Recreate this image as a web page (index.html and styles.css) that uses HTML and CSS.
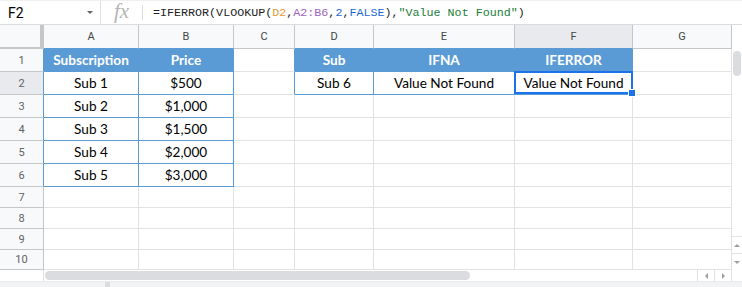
FILE: index.html
```html
<!DOCTYPE html>
<html lang="en">
<head>
    <meta charset="UTF-8">
    <meta name="viewport" content="width=device-width, initial-scale=1.0">
    <title>IFERROR VLOOKUP</title>
    <link rel="stylesheet" href="styles.css">
</head>
<body>
    <div class="formula-bar">
        <div class="name-box">
            <span>F2</span>
            <span class="caret"></span>
        </div>
        <div class="fx-box"><span class="fx">fx</span></div>
        <div class="formula">=IFERROR(VLOOKUP(<span class="ref1">D2</span>,<span class="ref2">A2:B6</span>,<span class="num">2</span>,<span class="num">FALSE</span>),<span class="str">"Value Not Found"</span>)</div>
    </div>

    <div class="sheet">
        <table class="grid">
            <colgroup>
                <col style="width: 44px">
                <col style="width: 95px">
                <col style="width: 95px">
                <col style="width: 61px">
                <col style="width: 79px">
                <col style="width: 141px">
                <col style="width: 118px">
                <col style="width: 99px">
            </colgroup>
            <tr class="head-row">
                <th class="corner"></th>
                <th class="blue-under">A</th>
                <th class="blue-under">B</th>
                <th>C</th>
                <th class="blue-under">D</th>
                <th class="blue-under">E</th>
                <th class="blue-under active">F</th>
                <th>G</th>
            </tr>
            <tr class="tall">
                <td class="rh edge">1</td>
                <td class="th-blue">Subscription</td>
                <td class="th-blue">Price</td>
                <td class="edge"></td>
                <td class="th-blue">Sub</td>
                <td class="th-blue">IFNA</td>
                <td class="th-blue">IFERROR</td>
                <td></td>
            </tr>
            <tr class="tall">
                <td class="rh active edge">2</td>
                <td class="bl">Sub 1</td>
                <td class="bl">$500</td>
                <td class="edge"></td>
                <td class="bl">Sub 6</td>
                <td class="bl">Value Not Found</td>
                <td class="bl selected">Value Not Found<span class="sel"><span class="handle"></span></span></td>
                <td></td>
            </tr>
            <tr class="tall">
                <td class="rh edge">3</td>
                <td class="bl">Sub 2</td>
                <td class="bl">$1,000</td>
                <td></td><td></td><td></td><td></td><td></td>
            </tr>
            <tr class="tall">
                <td class="rh edge">4</td>
                <td class="bl">Sub 3</td>
                <td class="bl">$1,500</td>
                <td></td><td></td><td></td><td></td><td></td>
            </tr>
            <tr class="tall">
                <td class="rh edge">5</td>
                <td class="bl">Sub 4</td>
                <td class="bl">$2,000</td>
                <td></td><td></td><td></td><td></td><td></td>
            </tr>
            <tr class="tall">
                <td class="rh edge">6</td>
                <td class="bl">Sub 5</td>
                <td class="bl">$3,000</td>
                <td></td><td></td><td></td><td></td><td></td>
            </tr>
            <tr class="short">
                <td class="rh">7</td>
                <td></td><td></td><td></td><td></td><td></td><td></td><td></td>
            </tr>
            <tr class="short">
                <td class="rh">8</td>
                <td></td><td></td><td></td><td></td><td></td><td></td><td></td>
            </tr>
            <tr class="short">
                <td class="rh">9</td>
                <td></td><td></td><td></td><td></td><td></td><td></td><td></td>
            </tr>
            <tr class="last">
                <td class="rh">10</td>
                <td></td><td></td><td></td><td></td><td></td><td></td><td></td>
            </tr>
        </table>

        <div class="vscroll">
            <div class="v-top"></div>
            <div class="v-track"><div class="v-thumb"></div></div>
            <div class="v-btn"><span class="tri-up"></span></div>
            <div class="v-btn"><span class="tri-down"></span></div>
        </div>
    </div>

    <div class="hscroll">
        <div class="h-left"></div>
        <div class="h-track"><div class="h-thumb"></div></div>
        <div class="h-btn"><span class="tri-left"></span></div>
        <div class="h-btn"><span class="tri-right"></span></div>
        <div class="h-corner"></div>
    </div>

    <div class="footer-strip"><span class="grip"></span></div>
</body>
</html>
```

FILE: styles.css
```css
body {
    margin: 0;
    width: 742px;
    background: #fff;
    font-family: Roboto, "Liberation Sans", sans-serif;
    overflow: hidden;
}

/* formula bar */
.formula-bar {
    display: flex;
    align-items: center;
    height: 23px;
    border-top: 1px solid #eef0f1;
    border-bottom: 1px solid #dadce0;
}
.name-box {
    width: 92px;
    height: 100%;
    padding-left: 8px;
    display: flex;
    align-items: center;
    justify-content: space-between;
    border-right: 1px solid #e0e0e0;
    font-size: 14px;
    color: #000;
}
.caret {
    width: 0;
    height: 0;
    margin-right: 7px;
    border-left: 3px solid transparent;
    border-right: 3px solid transparent;
    border-top: 3px solid #5f6368;
}
.fx-box {
    width: 41px;
    height: 15px;
    display: flex;
    align-items: center;
    justify-content: center;
    border-right: 1px solid #dadce0;
}
.fx {
    font-family: "Liberation Serif", serif;
    font-style: italic;
    font-size: 21px;
    color: #b4b4b4;
    margin-top: -2px;
}
.formula {
    padding-left: 10px;
    font-family: "Liberation Mono", monospace;
    font-size: 11.7px;
    color: #222;
    white-space: nowrap;
}
.ref1 { color: #e69a2f; }
.ref2 { color: #9d62c1; }
.num { color: #1b6ad6; }
.str { color: #188038; }

/* sheet grid */
.sheet {
    display: flex;
}
.grid {
    table-layout: fixed;
    border-collapse: separate;
    border-spacing: 0;
    width: 732px;
    font-family: Lato, "Liberation Sans", sans-serif;
    font-size: 13.6px;
    color: #000;
}
.grid th,
.grid td {
    padding: 0;
    text-align: center;
    vertical-align: middle;
    border-right: 1px solid #e2e2e2;
    border-bottom: 1px solid #e2e2e2;
    white-space: nowrap;
    overflow: visible;
}
.head-row {
    height: 24px;
}
.head-row th {
    background: #f8f9fa;
    border-right-color: #c4c7c5;
    border-bottom-color: #c4c7c5;
    font-family: Roboto, "Liberation Sans", sans-serif;
    font-weight: normal;
    font-size: 11px;
    color: #444746;
}
.head-row th.corner {
    border-right: 4px solid #c4c7c5;
    border-bottom: 2px solid #c4c7c5;
}
.head-row th.blue-under {
    border-bottom-color: #5b9bd5;
}
.head-row th.active,
.grid td.rh.active {
    background: #e8eaed;
}
.tall { height: 23px; }
.short { height: 21px; }
.last { height: 20px; }

.grid td.rh {
    background: #f8f9fa;
    border-right-color: #c4c7c5;
    border-bottom-color: #c4c7c5;
    font-family: Roboto, "Liberation Sans", sans-serif;
    font-size: 11px;
    color: #5f6368;
}
.grid td.edge {
    border-right-color: #5b9bd5;
}
.grid td.th-blue {
    background: #5b9bd5;
    border-right-color: #5b9bd5;
    border-bottom-color: #5b9bd5;
    color: #fff;
    font-weight: bold;
}
.grid td.bl {
    border-right-color: #5b9bd5;
    border-bottom-color: #5b9bd5;
}
.grid td.selected {
    position: relative;
}
.sel {
    position: absolute;
    top: -1px;
    left: -1px;
    right: -1px;
    bottom: 0;
    border: 2px solid #1a73e8;
    pointer-events: none;
}
.handle {
    position: absolute;
    right: -5px;
    bottom: -5px;
    width: 6px;
    height: 6px;
    background: #1a73e8;
    border: 1px solid #fff;
}

/* vertical scrollbar */
.vscroll {
    width: 10px;
    display: flex;
    flex-direction: column;
}
.v-top {
    height: 24px;
}
.v-track {
    flex: 1;
    padding: 2px 1px 0 1px;
}
.v-thumb {
    height: 25px;
    background: #dadce0;
    border-radius: 4px;
}
.v-btn {
    height: 16px;
    border-top: 1px solid #e2e2e2;
    display: flex;
    align-items: center;
    justify-content: center;
}
.tri-up {
    border-left: 3px solid transparent;
    border-right: 3px solid transparent;
    border-bottom: 3px solid #9aa0a6;
}
.tri-down {
    border-left: 3px solid transparent;
    border-right: 3px solid transparent;
    border-top: 3px solid #9aa0a6;
}

/* horizontal scrollbar */
.hscroll {
    display: flex;
    height: 11px;
    border-bottom: 1px solid #e8eaed;
}
.h-left {
    width: 43px;
    border-right: 1px solid #e2e2e2;
}
.h-track {
    flex: 1;
    padding: 1px 0 1px 1px;
}
.h-thumb {
    width: 425px;
    height: 100%;
    background: #dadce0;
    border-radius: 5px;
}
.h-btn {
    width: 16px;
    border-left: 1px solid #e2e2e2;
    display: flex;
    align-items: center;
    justify-content: center;
}
.tri-left {
    border-top: 3px solid transparent;
    border-bottom: 3px solid transparent;
    border-right: 3px solid #9aa0a6;
}
.tri-right {
    border-top: 3px solid transparent;
    border-bottom: 3px solid transparent;
    border-left: 3px solid #9aa0a6;
}
.h-corner {
    width: 10px;
    border-left: 1px solid #e2e2e2;
}

.footer-strip {
    height: 6px;
    background: #f1f3f4;
    position: relative;
}
.grip {
    position: absolute;
    left: 105px;
    top: 0;
    width: 5px;
    height: 6px;
    background: #dadce0;
}
```
